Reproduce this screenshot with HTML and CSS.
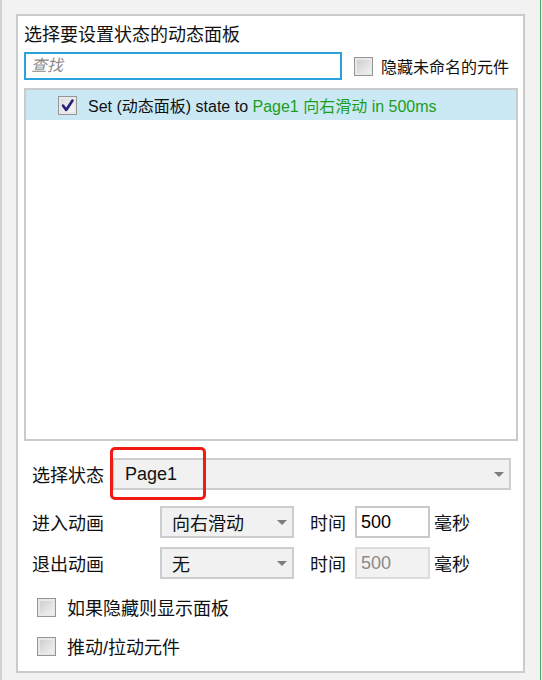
FILE: index.html
```html
<!DOCTYPE html>
<html lang="zh-CN">
<head>
    <meta charset="UTF-8">
    <title>设置面板状态</title>
    <link rel="stylesheet" href="styles.css">
</head>
<body>
<div class="frame">
    <div class="panel">
        <div class="title">选择要设置状态的动态面板</div>

        <div class="search-row">
            <input class="search" type="text" placeholder="查找">
            <label class="opt small">
                <span class="check"></span>
                <span>隐藏未命名的元件</span>
            </label>
        </div>

        <div class="list">
            <div class="row selected">
                <span class="check on">
                    <svg width="17" height="17" viewBox="0 0 17 17"><path d="M4 8.5 L7.2 13 L13.5 3.5" fill="none" stroke="#22227a" stroke-width="2.6" stroke-linecap="round" stroke-linejoin="round"/></svg>
                </span>
                <span class="row-text">Set (动态面板) state to <span class="hl">Page1 向右滑动 in 500ms</span></span>
            </div>
        </div>

        <div class="field state">
            <span class="label">选择状态</span>
            <div class="dropdown wide">
                <span>Page1</span>
                <span class="caret"></span>
                <span class="mark"></span>
            </div>
        </div>

        <div class="field">
            <span class="label anim">进入动画</span>
            <div class="dropdown narrow">
                <span>向右滑动</span>
                <span class="caret"></span>
            </div>
            <span class="time-label">时间</span>
            <input class="ms" type="text" value="500">
            <span class="unit">毫秒</span>
        </div>

        <div class="field exit">
            <span class="label anim">退出动画</span>
            <div class="dropdown narrow">
                <span>无</span>
                <span class="caret"></span>
            </div>
            <span class="time-label">时间</span>
            <input class="ms" type="text" value="500" disabled>
            <span class="unit">毫秒</span>
        </div>

        <label class="opt block first">
            <span class="check"></span>
            <span>如果隐藏则显示面板</span>
        </label>
        <label class="opt block">
            <span class="check"></span>
            <span>推动/拉动元件</span>
        </label>
    </div>
</div>
</body>
</html>
```

FILE: styles.css
```css
body {
    margin: 0;
    background: #f2f2f2;
    font-family: "Liberation Sans", "Noto Sans CJK SC", sans-serif;
    color: #111;
}
.frame {
    width: 541px;
    height: 680px;
    box-sizing: border-box;
    border-left: 2px solid #d2d2d2;
    border-right: 1px solid #3ea86a;
    padding: 14px 0 0 14px;
}
.panel {
    width: 509px;
    height: 659px;
    box-sizing: border-box;
    background: white;
    border: 2px solid #cbcbcb;
    padding: 8px 5px 0 6px;
}
.title {
    font-size: 18px;
    line-height: 22px;
}
.search-row {
    display: flex;
    align-items: center;
    margin-top: 6px;
    height: 28px;
}
.search {
    width: 318px;
    height: 28px;
    box-sizing: border-box;
    border: 2px solid #2ba1dd;
    padding: 0 5px;
    font-family: inherit;
    font-size: 16px;
    outline: none;
}
.search::placeholder {
    color: #8c8c8c;
    font-style: italic;
}
.opt {
    display: flex;
    align-items: center;
    gap: 11px;
    font-size: 18px;
}
.opt.small {
    margin-left: 12px;
    gap: 8px;
    font-size: 16px;
}
.check {
    width: 19px;
    height: 19px;
    box-sizing: border-box;
    border: 1px solid #959595;
    background: linear-gradient(135deg, #c9c9c9, #f6f6f6);
    box-shadow: inset 0 0 0 2px #e8e8e8;
    display: inline-flex;
    align-items: center;
    justify-content: center;
    flex: none;
}
.check.on {
    background: linear-gradient(135deg, #dcdcdc, #f8f8f8);
}
.list {
    margin-top: 8px;
    width: 494px;
    height: 353px;
    box-sizing: border-box;
    border: 2px solid #cbcbcb;
}
.row {
    height: 30px;
    display: flex;
    align-items: center;
    padding-left: 32px;
    gap: 11px;
    font-size: 16px;
}
.row.selected {
    background: #cbe8f5;
}
.hl {
    color: #1c9e1c;
}
.field {
    display: flex;
    align-items: center;
    height: 32px;
    margin-top: 16px;
    padding-left: 8px;
    font-size: 18px;
}
.field.state {
    margin-top: 17px;
}
.field.exit {
    margin-top: 9px;
}
.label {
    width: 80px;
    flex: none;
}
.label.anim {
    width: 128px;
}
.dropdown {
    position: relative;
    height: 32px;
    box-sizing: border-box;
    background: #f1f1f1;
    border: 2px solid #cdcdcd;
    display: flex;
    align-items: center;
    padding-left: 11px;
}
.dropdown.wide {
    width: 399px;
}
.dropdown.narrow {
    width: 134px;
    padding-left: 10px;
}
.caret {
    position: absolute;
    right: 5px;
    top: 12px;
    border-left: 5px solid transparent;
    border-right: 5px solid transparent;
    border-top: 5px solid #7d7d7d;
}
/* red highlight drawn on top of the state picker */
.mark {
    position: absolute;
    left: -4px;
    top: -13px;
    width: 96px;
    height: 53px;
    box-sizing: border-box;
    border: 3px solid #f01c14;
    border-radius: 5px;
}
.time-label {
    margin-left: 16px;
    width: 45px;
}
.ms {
    width: 75px;
    height: 32px;
    box-sizing: border-box;
    border: 2px solid #c9c9c9;
    padding: 0 4px;
    font-family: inherit;
    font-size: 18px;
    color: #000;
    background: white;
}
.ms:disabled {
    background: #f2f2f2;
    border-color: #dcdcdc;
    color: #8a8a8a;
}
.unit {
    margin-left: 4px;
}
.opt.block {
    height: 30px;
    margin-left: 13px;
    margin-top: 9px;
}
.opt.block.first {
    margin-top: 13px;
}
```
